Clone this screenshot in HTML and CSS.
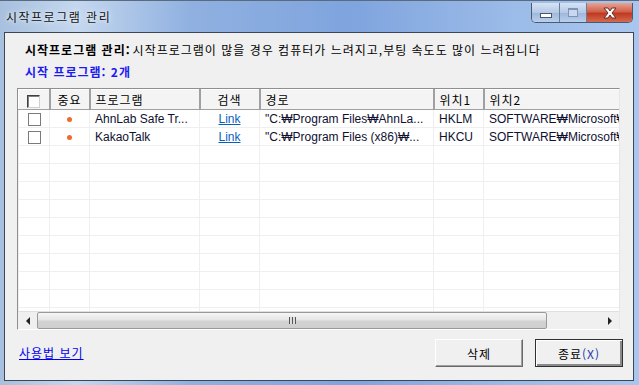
FILE: index.html
```html
<!DOCTYPE html>
<html lang="ko">
<head>
    <meta charset="UTF-8">
    <title>시작프로그램 관리</title>
    <link rel="stylesheet" href="styles.css">
</head>
<body>
    <div class="window">
        <div class="titlebar">
            <span class="title">시작프로그램 관리</span>
            <div class="caption-buttons">
                <div class="cap-btn cap-min"><span class="min-bar"></span></div>
                <div class="cap-btn cap-max"><span class="max-box"></span></div>
                <div class="cap-btn cap-close">
                    <svg width="16" height="12" viewBox="0 0 16 12">
                        <path d="M2 1 L6 1 L8 4 L10 1 L14 1 L10 6 L14 11 L10 11 L8 8 L6 11 L2 11 L6 6 Z" fill="#fff" stroke="#6b2a24" stroke-width="1"/>
                    </svg>
                </div>
            </div>
        </div>

        <div class="client">
            <p class="intro"><b>시작프로그램 관리:</b>시작프로그램이 많을 경우 컴퓨터가 느려지고,부팅 속도도 많이 느려집니다</p>
            <p class="count">시작 프로그램: 2개</p>

            <div class="listview">
                <div class="list-clip">
                    <table class="grid">
                        <colgroup>
                            <col style="width:31px">
                            <col style="width:40px">
                            <col style="width:110px">
                            <col style="width:60px">
                            <col style="width:174px">
                            <col style="width:50px">
                            <col style="width:200px">
                        </colgroup>
                        <thead>
                            <tr>
                                <th class="c-center"><span class="chk chk-head"></span></th>
                                <th class="c-center">중요</th>
                                <th>프로그램</th>
                                <th class="c-center">검색</th>
                                <th>경로</th>
                                <th>위치1</th>
                                <th>위치2</th>
                            </tr>
                        </thead>
                        <tbody>
                            <tr>
                                <td class="c-center"><span class="chk"></span></td>
                                <td class="c-center"><span class="dot"></span></td>
                                <td>AhnLab Safe Tr...</td>
                                <td class="c-center"><a href="#" class="link">Link</a></td>
                                <td>"C:₩Program Files₩AhnLa...</td>
                                <td>HKLM</td>
                                <td>SOFTWARE₩Microsoft₩</td>
                            </tr>
                            <tr>
                                <td class="c-center"><span class="chk"></span></td>
                                <td class="c-center"><span class="dot"></span></td>
                                <td>KakaoTalk</td>
                                <td class="c-center"><a href="#" class="link">Link</a></td>
                                <td>"C:₩Program Files (x86)₩...</td>
                                <td>HKCU</td>
                                <td>SOFTWARE₩Microsoft₩</td>
                            </tr>
                            <tr><td></td><td></td><td></td><td></td><td></td><td></td><td></td></tr>
                            <tr><td></td><td></td><td></td><td></td><td></td><td></td><td></td></tr>
                            <tr><td></td><td></td><td></td><td></td><td></td><td></td><td></td></tr>
                            <tr><td></td><td></td><td></td><td></td><td></td><td></td><td></td></tr>
                            <tr><td></td><td></td><td></td><td></td><td></td><td></td><td></td></tr>
                            <tr><td></td><td></td><td></td><td></td><td></td><td></td><td></td></tr>
                            <tr><td></td><td></td><td></td><td></td><td></td><td></td><td></td></tr>
                            <tr><td></td><td></td><td></td><td></td><td></td><td></td><td></td></tr>
                            <tr><td></td><td></td><td></td><td></td><td></td><td></td><td></td></tr>
                            <tr><td></td><td></td><td></td><td></td><td></td><td></td><td></td></tr>
                        </tbody>
                    </table>
                </div>
                <div class="hscroll">
                    <div class="arrow-btn"><span class="tri-left"></span></div>
                    <div class="track">
                        <div class="thumb"><span class="grip"></span></div>
                    </div>
                    <div class="arrow-btn"><span class="tri-right"></span></div>
                </div>
            </div>

            <div class="footer">
                <a href="#" class="help-link">사용법 보기</a>
                <div class="buttons">
                    <button class="btn">삭제</button>
                    <button class="btn btn-default">종료<span class="accel">(X)</span></button>
                </div>
            </div>
        </div>
    </div>
</body>
</html>
```

FILE: styles.css
```css
body {
    margin: 0;
    width: 639px;
    height: 385px;
    overflow: hidden;
    font-family: "Liberation Sans", "Noto Sans CJK KR", sans-serif;
    font-size: 12px;
    color: #000;
}

.window {
    width: 639px;
    height: 385px;
    display: flex;
    flex-direction: column;
    background: linear-gradient(90deg, #a7c0de 0%, #c4d7ee 12%, #8fb0e0 30%, #7fa4de 55%, #9bbbe8 80%, #a9c6ee 100%);
    border-top: 1px solid #5a6b80;
    box-sizing: border-box;
}

.titlebar {
    height: 31px;
    display: flex;
    justify-content: space-between;
    align-items: flex-start;
}

.title {
    margin: 8px 0 0 6px;
    font-family: "Noto Sans CJK KR", sans-serif;
    font-size: 12px;
    line-height: 16px;
    letter-spacing: 1.5px;
    color: #111;
    text-shadow: 0 0 6px #e8f0fa, 0 0 3px #e8f0fa;
}

.caption-buttons {
    display: flex;
    margin: 2px 6px 0 0;
    border: 1px solid #4a5a70;
    border-top: none;
    border-radius: 0 0 5px 5px;
    overflow: hidden;
    height: 19px;
}

.cap-btn {
    display: flex;
    align-items: center;
    justify-content: center;
    height: 19px;
}

.cap-min {
    width: 27px;
    background: linear-gradient(#d6e3f3, #b4c9e6 50%, #9db6dc 51%, #b9cfec);
    border-right: 1px solid #6a7c96;
}

.cap-max {
    width: 26px;
    background: linear-gradient(#d6e3f3, #b4c9e6 50%, #9db6dc 51%, #b9cfec);
    border-right: 1px solid #6a7c96;
}

.min-bar {
    width: 10px;
    height: 3px;
    margin-top: 6px;
    background: #fff;
    border: 1px solid #4a5670;
}

.max-box {
    width: 8px;
    height: 6px;
    border: 1px solid #7f93b4;
    border-top-width: 2px;
    background: #c9d8ee;
}

.cap-close {
    width: 45px;
    background: linear-gradient(#e8a493, #d0624c 45%, #c03a22 55%, #d46a4e);
}

.client {
    flex: 1;
    margin: 0 5px 4px 4px;
    border: 1px solid #3b4656;
    background: #f0f0f0;
    display: flex;
    flex-direction: column;
    font-family: "Noto Sans CJK KR", sans-serif;
}

.intro {
    margin: 9px 0 0 20px;
    line-height: 16px;
    font-size: 12px;
    letter-spacing: 1px;
}

.intro b {
    font-weight: bold;
    margin-right: 2px;
}

.count {
    margin: 6px 0 0 20px;
    line-height: 16px;
    font-weight: bold;
    letter-spacing: 1px;
    color: #1c1cf0;
}

.listview {
    margin: 8px 0 0 12px;
    width: 603px;
    height: 242px;
    box-sizing: border-box;
    border: 1px solid #8f8f8f;
    border-right-color: #e6e6e6;
    border-bottom-color: #ffffff;
    background: #fff;
    display: flex;
    flex-direction: column;
}

.list-clip {
    flex: 1;
    overflow: hidden;
}

.grid {
    border-collapse: collapse;
    table-layout: fixed;
    width: 665px;
    font-family: "Liberation Sans", "Noto Sans CJK KR", sans-serif;
    font-size: 12px;
}

.grid th {
    height: 20px;
    padding: 0 0 0 5px;
    box-sizing: border-box;
    text-align: left;
    font-weight: normal;
    font-family: "Noto Sans CJK KR", sans-serif;
    letter-spacing: 1px;
    background: #f4f4f4;
    border-left: 1px solid #fff;
    border-right: 2px solid #a0a0a0;
    border-bottom: 1px solid #a0a0a0;
    border-top: 1px solid #fff;
    white-space: nowrap;
}

.grid td {
    height: 17px;
    padding: 0 0 0 5px;
    border: 1px solid #efefef;
    border-top: none;
    white-space: nowrap;
    overflow: hidden;
    color: #101030;
}

.grid th.c-center,
.grid td.c-center {
    text-align: center;
    padding: 0;
}

.chk {
    display: inline-block;
    width: 11px;
    height: 11px;
    border: 1px solid #7a7a7a;
    background: #fff;
    vertical-align: middle;
}

.chk-head {
    border: 1px solid #404040;
    border-right-color: #d0d0d0;
    border-bottom-color: #d0d0d0;
    box-shadow: inset 1px 1px 0 #808080;
}

.dot {
    display: inline-block;
    width: 5px;
    height: 5px;
    border-radius: 50%;
    background: #f26a2a;
    vertical-align: middle;
}

.link {
    color: #0a5fbd;
    text-decoration: underline;
}

.hscroll {
    height: 17px;
    display: flex;
    background: #f0f0f0;
    border-top: 1px solid #e0e0e0;
}

.arrow-btn {
    width: 19px;
    display: flex;
    align-items: center;
    justify-content: center;
}

.tri-left {
    width: 0;
    height: 0;
    border-top: 4px solid transparent;
    border-bottom: 4px solid transparent;
    border-right: 4px solid #222;
}

.tri-right {
    width: 0;
    height: 0;
    border-top: 4px solid transparent;
    border-bottom: 4px solid transparent;
    border-left: 4px solid #222;
}

.track {
    flex: 1;
    display: flex;
    padding-right: 53px;
}

.thumb {
    flex: 1;
    box-sizing: border-box;
    border: 1px solid #9a9a9a;
    border-radius: 2px;
    background: linear-gradient(#f6f6f6, #e6e6e6 45%, #d2d2d2 55%, #cfcfcf);
    display: flex;
    align-items: center;
    justify-content: center;
}

.grip {
    width: 7px;
    height: 7px;
    background: repeating-linear-gradient(90deg, #555 0 1px, #ddd 1px 3px);
}

.footer {
    display: flex;
    justify-content: space-between;
    align-items: center;
    margin: 9px 10px 0 14px;
}

.help-link {
    color: #0000ee;
    text-decoration: underline;
    font-size: 12px;
    line-height: 16px;
    letter-spacing: 1px;
}

.buttons {
    display: flex;
    gap: 12px;
}

.btn {
    width: 88px;
    height: 28px;
    box-sizing: border-box;
    background: #f0f0f0;
    font-family: "Noto Sans CJK KR", sans-serif;
    font-size: 12px;
    letter-spacing: 1px;
    color: #000;
    border: 1px solid;
    border-color: #ffffff #696969 #696969 #ffffff;
    box-shadow: inset -1px -1px 0 #a0a0a0;
    padding: 0;
}

.btn-default {
    border: 1px solid #303030;
    box-shadow: inset 1px 1px 0 #fff, inset -2px -2px 0 #8a8a8a;
}

.accel {
    color: #1a3aa8;
}
```
